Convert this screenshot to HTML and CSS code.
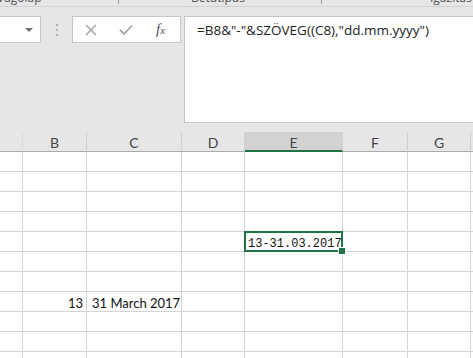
FILE: index.html
```html
<!DOCTYPE html>
<html>
<head>
<meta charset="utf-8">
<link rel="stylesheet" href="styles.css">
</head>
<body>
<div class="app">
  <div class="groups">
    <span class="glabel g1">Vágólap</span>
    <span class="launch l1"></span>
    <span class="glabel g2">Betűtípus</span>
    <span class="launch l2"></span>
    <span class="glabel g3">Igazítás</span>
  </div>
  <div class="fbar">
    <div class="namebox"><span class="arrow"></span></div>
    <div class="dots"><i></i><i></i><i></i></div>
    <div class="btns">
      <svg class="ico" width="12" height="12" viewBox="0 0 12 12"><path d="M1 1 L11 11 M11 1 L1 11" stroke="#a6a6a6" stroke-width="1.6" fill="none"/></svg>
      <svg class="ico" width="14" height="12" viewBox="0 0 14 12"><path d="M1 6 L5 10 L13 1.5" stroke="#a6a6a6" stroke-width="1.8" fill="none"/></svg>
      <span class="fx"><span class="f">f</span><span class="x">x</span></span>
    </div>
    <div class="formula">=B8&amp;"-"&amp;SZÖVEG((C8),"dd.mm.yyyy")</div>
  </div>
  <div class="sheet">
    <div class="hd"></div><div class="hd">B</div><div class="hd">C</div><div class="hd">D</div><div class="hd act">E</div><div class="hd">F</div><div class="hd">G</div><div class="hd last"></div>
    <div class="c"></div><div class="c"></div><div class="c"></div><div class="c"></div><div class="c"></div><div class="c"></div><div class="c"></div><div class="c"></div>
    <div class="c"></div><div class="c"></div><div class="c"></div><div class="c"></div><div class="c"></div><div class="c"></div><div class="c"></div><div class="c"></div>
    <div class="c"></div><div class="c"></div><div class="c"></div><div class="c"></div><div class="c"></div><div class="c"></div><div class="c"></div><div class="c"></div>
    <div class="c"></div><div class="c"></div><div class="c"></div><div class="c"></div><div class="c"></div><div class="c"></div><div class="c"></div><div class="c"></div>
    <div class="c"></div><div class="c"></div><div class="c"></div><div class="c"></div><div class="c sel"><span class="mono">13-31.03.2017</span></div><div class="c"></div><div class="c"></div><div class="c"></div>
    <div class="c"></div><div class="c"></div><div class="c"></div><div class="c"></div><div class="c"></div><div class="c"></div><div class="c"></div><div class="c"></div>
    <div class="c"></div><div class="c"></div><div class="c"></div><div class="c"></div><div class="c"></div><div class="c"></div><div class="c"></div><div class="c"></div>
    <div class="c"></div><div class="c num">13</div><div class="c txt">31 March 2017</div><div class="c"></div><div class="c"></div><div class="c"></div><div class="c"></div><div class="c"></div>
    <div class="c"></div><div class="c"></div><div class="c"></div><div class="c"></div><div class="c"></div><div class="c"></div><div class="c"></div><div class="c"></div>
    <div class="c"></div><div class="c"></div><div class="c"></div><div class="c"></div><div class="c"></div><div class="c"></div><div class="c"></div><div class="c"></div>
    <div class="c"></div><div class="c"></div><div class="c"></div><div class="c"></div><div class="c"></div><div class="c"></div><div class="c"></div><div class="c"></div>
  </div>
</div>
</body>
</html>
```
FILE: styles.css
```css
* { box-sizing: border-box; }
html, body { margin: 0; padding: 0; }
body { width: 473px; height: 358px; overflow: hidden; background: #e6e6e6; font-family: Lato, "Open Sans", sans-serif; }
.app { width: 473px; height: 358px; overflow: hidden; }

.groups { height: 7px; border-bottom: 1px solid #d2d2d2; display: flex; align-items: flex-start; overflow: hidden; white-space: nowrap; }
.glabel { font-family: "Open Sans", sans-serif; font-size: 12px; line-height: 14px; color: #555; margin-top: -9px; flex: none; }
.g1 { margin-left: -3px; width: 116px; }
.g2 { margin-left: 72px; width: 125px; }
.g3 { margin-left: 108px; }
.launch { flex: none; width: 6px; height: 6px; border-right: 1px solid #9a9a9a; border-top: 1px solid #9a9a9a; margin-top: -2px; position: relative; }

.fbar { display: flex; align-items: flex-start; margin-top: 9px; height: 106px; }
.namebox { width: 41px; height: 27px; background: #fff; border: 1px solid #c6c6c6; border-left: none; display: flex; align-items: center; justify-content: flex-end; padding-right: 7px; }
.arrow { width: 0; height: 0; border-left: 4px solid transparent; border-right: 4px solid transparent; border-top: 4px solid #707070; }
.dots { width: 31px; height: 27px; display: flex; flex-direction: column; align-items: center; justify-content: center; gap: 3px; }
.dots i { display: block; width: 2px; height: 2px; background: #b0b0b0; }
.btns { width: 109px; height: 27px; background: #fff; border: 1px solid #c6c6c6; display: flex; align-items: center; padding-left: 12px; }
.ico:nth-child(1) { margin-right: 22px; }
.ico:nth-child(2) { margin-right: 23px; }
.fx { font-family: "Liberation Serif", serif; font-style: italic; color: #555; display: flex; align-items: baseline; }
.fx .f { font-size: 15px; }
.fx .x { font-size: 11px; }
.formula { flex: 1; margin-left: 3px; height: 107px; background: #fff; border: 1px solid #c6c6c6; border-right: none; padding: 4px 0 0 12px; font-family: "Open Sans", sans-serif; font-size: 13.5px; color: #222; white-space: nowrap; }

.sheet { margin-top: 10px; display: grid; grid-template-columns: 23px 64px 95px 63px 98px 65px 63px 40px; grid-auto-rows: 20px; }
.hd { background: #e6e6e6; border-right: 1px solid #cfcfcf; border-bottom: 1px solid #ababab; font-size: 14px; color: #444; text-align: center; line-height: 19px; padding-top: 1px; }
.hd.act { background: #d2d2d2; border-bottom: 2px solid #217346; }
.hd:first-child, .hd.last { border-right-color: #d8d8d8; }
.c { background: #fff; border-right: 1px solid #d4d4d4; border-bottom: 1px solid #d4d4d4; font-size: 13px; color: #111; line-height: 18px; padding-top: 2px; white-space: nowrap; }
.num { text-align: right; padding-right: 3px; }
.txt { padding-left: 5px; }
.sel { position: relative; overflow: visible; padding-top: 0; line-height: 19px; }
.sel::after { content: ""; position: absolute; left: -1px; top: -1px; right: -1px; bottom: -1px; border: 2px solid #217346; }
.sel::before { content: ""; position: absolute; right: -4px; bottom: -4px; width: 6px; height: 6px; background: #217346; border: 1px solid #fff; z-index: 2; }
.mono { font-family: "Liberation Mono", monospace; font-size: 12px; color: #111; padding-left: 3px; position: relative; top: 1px; }
```
